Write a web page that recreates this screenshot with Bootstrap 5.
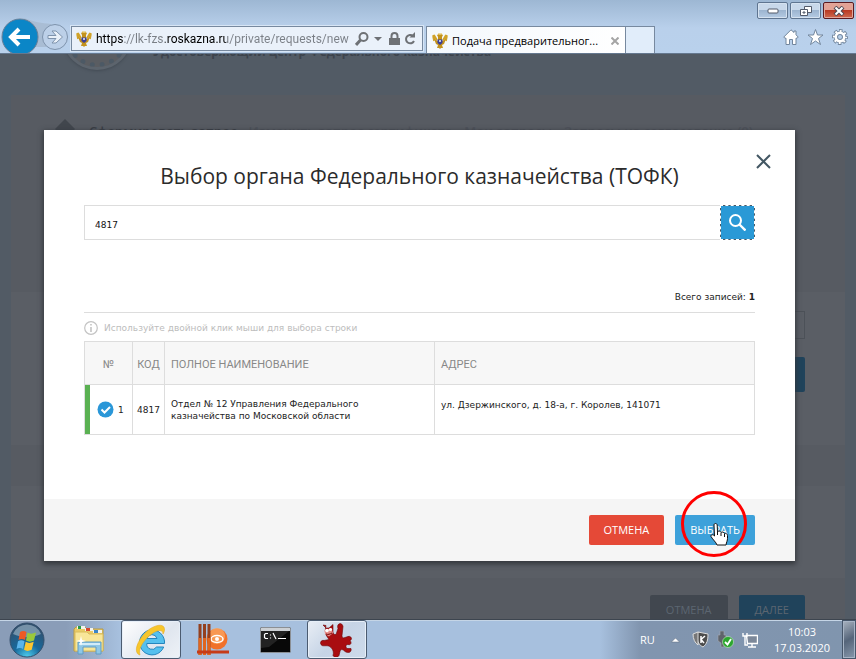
<!DOCTYPE html>
<html lang="ru">
<head>
<meta charset="utf-8">
<meta name="viewport" content="width=device-width, initial-scale=1">
<title>Подача предварительного запроса</title>
<link href="https://cdn.jsdelivr.net/npm/bootstrap@5.3.0/dist/css/bootstrap.min.css" rel="stylesheet">
<style>
  :root { --ui: "Open Sans", "Noto Sans", sans-serif; --body: "DejaVu Sans", Verdana, sans-serif; }
  body { font-family: var(--ui); font-size: 11px; line-height: 16px; color: #222; background: #525b65; }
  button { font-family: inherit; }
  svg { display: block; flex: none; }
  .bare { border: 0; background: none; padding: 0; }

  /* browser frame */
  .browser-bar { height: 54px; background: linear-gradient(#9db7d3, #b9d0eb 28px, #b9d1ec); border-bottom: 1px solid #65788f; }
  .nav-pair { width: 71px; height: 36px; overflow: hidden; }
  .address { flex: 0 1 352px; height: 25px; margin-bottom: 2px; padding: 0 5px 0 4px; background: #eaf1fa; border: 1px solid #77899f; outline: 1px solid #d7e5f5; }
  .address input { font: 400 12px/16px Roboto, var(--ui); height: 21px; margin-left: 4px; color: transparent; -webkit-background-clip: text; background-clip: text;
    background-image: linear-gradient(90deg, #000 28px, #7a7f86 28px 69px, #000 69px 130px, #7a7f86 130px); outline: 0; }
  .page-tab { flex: 0 1 200px; min-width: 0; height: 27px; margin-left: 3px; padding: 2px 6px 0 5px; background: linear-gradient(90deg, #f3f8fd, #fff); border: 1px solid #77899f; border-bottom: 0; }
  .new-tab { width: 29px; height: 27px; background: #e1edfa; border: 1px solid #77899f; border-width: 1px 1px 0 0; }
  .win-btns { gap: 2px; padding: 2px 2px 0 0; }
  .win-btn { width: 31px; height: 17px; border: 1px solid #5f7590; border-radius: 2px; background: linear-gradient(#c8d8ea 45%, #9db5d0 50%, #b5cbe4); box-shadow: inset 0 0 0 1px #d5e2f0; }
  .win-close { border-color: #5b1a20; background: linear-gradient(#e3a295 45%, #b93a23 50%, #cf6a50); box-shadow: inset 0 0 0 1px #e0a79c; }
  .tools { padding: 10px 8px 0 0; }

  /* dimmed page */
  .dim-brand { height: 41px; padding-left: 62px; }
  .seal { width: 70px; height: 70px; margin-top: -54px; border-radius: 50%; background: #5a5d62; border: 3px solid #5c646d; box-shadow: 0 1px 3px #434b54; }
  .seal::after { content: ""; display: block; height: 100%; border-radius: 50%; border: 5px dotted #4c5965; }
  .brand-text { margin: -10px 0 0 21px; font-size: 12px; font-weight: 700; color: #3c434c; white-space: nowrap; }
  .dim-page { margin: 0 11px; color: #3a3e45; }
  .band { background: #575b62; }
  .band-light { background: #5a5e65; }
  .band-a { height: 142px; padding: 24px 0 0 44px; }
  .band-b { height: 55px; } .band-c { height: 153px; } .band-d { height: 41px; } .band-e { height: 92px; }
  .band-c { padding: 19px 40px 0 73px; }
  .band-f { height: 90px; padding: 17px 40px 0; gap: 11px; }
  .steps { gap: 12px; font-size: 13px; font-weight: 600; padding: 4px 0 0 14px; white-space: nowrap; }
  .steps span + span { color: #4e525a; }
  .dim-field { height: 28px; margin-bottom: 18px; border: 1px solid #4c5158; background: transparent; }
  .dim-btn { height: 30px; padding: 0 16px; border: 0; border-radius: 2px; color: #5c6671; background: #20435b; }
  .dim-tall { height: 35px; }
  .dim-grey { background: #41474f; }

  /* dialog */
  .dialog-layer { position: absolute; inset: 76px 61px auto 44px; }
  .dialog-box { background: #fff; box-shadow: 0 2px 5px 1px #33373c; font-family: var(--body); font-size: 9px; line-height: 12px; }
  .dialog-main { padding: 34px 40px 64px; }
  .dialog-title { font: 400 21px/25px var(--ui); color: #2b2b2b; }
  .dialog-close { position: absolute; top: 24px; right: 24px; }
  .find-field { height: 35px; border: 1px solid #ddd; border-right: 0; padding: 4px 10px 0; font-size: 9px; outline: 0; color: #111; }
  .find-btn { width: 35px; height: 35px; border: 1px dashed #fff; border-radius: 0; background: linear-gradient(#2a99d6, #2a99d6) padding-box, #4a5a66 border-box; }
  .total { margin: 51px 0 9px; color: #222; }
  .hint { border-top: 1px solid #ddd; color: #bdbdbd; padding: 8px 0 6px; gap: 6px; }
  .orgs { table-layout: fixed; border: 1px solid #ddd; color: #222; }
  .orgs th, .orgs td { border: 1px solid #ddd; padding: 0 6px; }
  .orgs th { height: 43px; padding-top: 3px; background: #f7f7f7; font: 400 11px/16px Roboto, var(--ui); color: #888; }
  .orgs td { height: 50px; }
  .orgs .num { width: 48px; }
  .orgs .code { width: 32px; padding-left: 0; padding-right: 0; text-align: center; }
  .orgs .full { width: 270px; }
  .orgs td.num { box-shadow: inset 5px 0 #5ab152; padding: 0 0 0 12px; }
  .orgs .full-name { padding-right: 60px; }
  .orgs .addr { vertical-align: top; padding-top: 14px; }
  .dialog-foot { background: #f5f5f5; padding: 16px 40px; gap: 11px; }
  .act { height: 30px; padding: 0 15px; border: 0; border-radius: 2px; color: #fff; font: 400 11px/16px var(--ui); }
  .act-cancel { background: #e54937; }
  .act-pick { background: #3da1da; }
  .pointer-mark { position: absolute; left: 6px; top: -25px; pointer-events: none; }

  /* taskbar */
  .taskbar { height: 40px; border-top: 1px solid #3d454f; box-shadow: inset 0 1px #c5d5e6; background: linear-gradient(90deg, #8a9db8, #8a9db8 66px, #a7c0de 120px, #a7c0de calc(100% - 256px), #8195af calc(100% - 216px), #8095ae); padding-left: 9px; color: #fff; }
  .launchers { gap: 2px; margin-left: 14px; }
  .launch { width: 60px; height: 39px; }
  .running { background: linear-gradient(135deg, #e9eef5, #c6d4e6 50%, #cedbeb); border: 1px solid #4b5b70; border-radius: 3px; box-shadow: inset 0 0 0 1px #e7eff8; }
  .running-active { background: linear-gradient(135deg, #fff, #e0e6ef 60%, #eef2f7); }
  .clock { margin-right: 12px; }
  .peek { width: 14px; height: 39px; border: 1px solid #46566a; background: linear-gradient(150deg, #a9b3c0, #55657a 50%, #8797ab); box-shadow: inset 0 0 0 1px #a7b4c5; }
</style>
</head>
<body class="d-flex flex-column vh-100 overflow-hidden">

<svg class="d-none" aria-hidden="true">
  <symbol id="eagle" viewBox="0 0 16 16">
    <path d="M1 2l2 5-1-5 3 5M2 8l-1-5M15 2l-2 5 1-5-3 5M14 8l1-5" stroke="#d0a229" stroke-width="1.6" fill="none"/>
    <path d="M2 6l4 2V4L5 2l2-1 1 1 1-1 2 1-1 2v4l4-2-2 5-2 1 1 3H9l-1 1-1-1H5l1-3-2-1z" fill="#c3921c"/>
    <path d="M6 1h1M9 1h1M8 0v2" stroke="#e3bd45"/><path d="M5.500 6.500h5v3.500l-2.500 2-2.500-2z" fill="#3b3e98"/><path d="M7 7h2v2H7z" fill="#b7c4e8"/>
  </symbol>
</svg>

<header class="browser-bar d-flex align-items-end flex-shrink-0">
  <div class="nav-pair flex-shrink-0">
    <svg width="71" height="36" viewBox="0 0 71 36">
      <path d="M24 1C34 5 42 6 51 7L46 30H30z" fill="#a9bdd4"/>
      <circle cx="20" cy="20" r="18" fill="#0b86c7" stroke="#6a7f97"/>
      <path d="M11 20h19M19 12l-8 8 8 8" fill="none" stroke="#fff" stroke-width="4"/>
      <circle cx="55" cy="20" r="12.500" fill="#bcd0e8" stroke="#7e93ac"/>
      <path d="M48 18.500h8L52 14h4l6.500 6-6.500 6h-4l4-4.500h-8z" fill="#e9f0f8" stroke="#7e93ac"/>
    </svg>
  </div>
  <div class="address d-flex align-items-center">
    <svg width="16" height="16"><use href="#eagle"/></svg>
    <input class="bare flex-grow-1 w-100" type="text" aria-label="Адрес" value="https://lk-fzs.roskazna.ru/private/requests/new">
    <svg width="62" height="16" viewBox="0 0 62 16">
      <circle cx="8.500" cy="6" r="4" fill="none" stroke="#6e7175" stroke-width="2"/><path d="M5.500 9L1 14" stroke="#6e7175" stroke-width="3"/>
      <path d="M19 6h8l-4 4z" fill="#6e7175"/>
      <path d="M34 7h11v7H34z" fill="#6e7175"/><path d="M36.500 8V5a3 3 0 0 1 6 0v3" fill="none" stroke="#6e7175" stroke-width="2"/>
      <path d="M58 5a4.200 4.200 0 1 0 1 5" fill="none" stroke="#6e7175" stroke-width="2"/><path d="M54.500 6.500h5.500V1z" fill="#6e7175"/>
    </svg>
  </div>
  <div class="page-tab d-flex align-items-center">
    <svg width="16" height="16"><use href="#eagle"/></svg>
    <span class="text-nowrap text-black ms-1 flex-grow-1">Подача предварительног...</span>
    <button class="bare" aria-label="Закрыть вкладку"><svg width="8" height="8" viewBox="0 0 8 8"><path d="M0.500 0.500l7 7M7.500 0.500l-7 7" stroke="#a5a5a5" stroke-width="2"/></svg></button>
  </div>
  <button class="new-tab p-0 rounded-0" aria-label="Новая вкладка"></button>
  <div class="ms-auto align-self-stretch d-flex flex-column align-items-end">
    <div class="win-btns d-flex">
      <button class="win-btn p-0 d-flex align-items-center justify-content-center" aria-label="Свернуть"><svg width="12" height="6"><rect x="1" y="1" width="10" height="4" rx="1" fill="#fff" stroke="#535b6b"/></svg></button>
      <button class="win-btn p-0 d-flex align-items-center justify-content-center" aria-label="Восстановить"><svg width="12" height="12" viewBox="0 0 12 12"><path d="M4.500 1.500h7v6h-7z" fill="#fff" stroke="#535b6b"/><path d="M.5 4.500h7v6h-7z" fill="#fff" stroke="#535b6b"/><path d="M3 7h2v1H3z" fill="none" stroke="#535b6b"/></svg></button>
      <button class="win-btn win-close p-0 d-flex align-items-center justify-content-center" aria-label="Закрыть"><svg width="12" height="10" viewBox="0 0 12 10"><path d="M2 1l8 8M10 1L2 9" stroke="#4e4a55" stroke-width="4"/><path d="M2.500 1.500l7 7M9.500 1.500l-7 7" stroke="#fff" stroke-width="2"/></svg></button>
    </div>
    <div class="tools d-flex gap-2">
      <button class="bare" aria-label="Домой"><svg width="16" height="16" viewBox="0 0 16 16"><path d="M8 .8L.8 8l1 1.200H3v6.300h3.500v-5h3v5H13V9.200h1.200l1-1.200L13 5.800V2h-2v1.500z" fill="#fff" stroke="#71859c"/></svg></button>
      <button class="bare" aria-label="Избранное"><svg width="17" height="16" viewBox="0 0 16 16"><path d="M8 .5l2 5.500h5.500L11 9.500l2 6-5-3.500-5 3.500 2-6L.5 6H6z" fill="#fff" stroke="#71859c"/></svg></button>
      <button class="bare" aria-label="Параметры"><svg width="16" height="16" viewBox="0 0 16 16"><circle cx="8" cy="8" r="6.300" fill="none" stroke="#71859c" stroke-width="3.400" stroke-dasharray="3.200 1.750" stroke-dashoffset="1.600"/><circle cx="8" cy="8" r="4.500" fill="none" stroke="#71859c" stroke-width="3.600"/><circle cx="8" cy="8" r="6" fill="none" stroke="#fff" stroke-width="2.200" stroke-dasharray="1.800 2.912" stroke-dashoffset=".9"/><circle cx="8" cy="8" r="4.100" fill="none" stroke="#fff" stroke-width="2.800"/><circle cx="8" cy="8" r="2.500" fill="#b9d1ec" stroke="#71859c"/></svg></button>
    </div>
  </div>
</header>

<main class="flex-grow-1 position-relative overflow-hidden">
  <div class="dim-brand d-flex align-items-start">
    <div class="seal flex-shrink-0"></div>
    <div class="brand-text">Удостоверяющий центр Федерального казначейства</div>
  </div>
  <div class="dim-page">
    <div class="band band-a d-flex align-items-start">
      <svg width="20" height="20" viewBox="0 0 20 20"><path d="M10 0l10 10-10 10L0 10z" fill="#41464d"/></svg>
      <div class="steps d-flex"><span>Сформировать запрос</span><span>Изменить запрос сертификата</span><span>Мои запросы</span><span>Запросы на согласование (0)</span></div>
    </div>
    <div class="band band-b"></div>
    <div class="band-light band-c">
      <input class="dim-field d-block w-100" type="text" aria-label="Орган Федерального казначейства">
      <div class="text-end"><button class="dim-btn dim-tall">ВЫБРАТЬ</button></div>
    </div>
    <div class="band band-d"></div>
    <div class="band-light band-e"></div>
    <div class="band band-f d-flex justify-content-end align-items-start">
      <button class="dim-btn dim-grey">ОТМЕНА</button>
      <button class="dim-btn">ДАЛЕЕ</button>
    </div>
  </div>

  <div class="dialog-layer" role="dialog" aria-labelledby="dlg-title">
    <div class="dialog-box">
      <button class="dialog-close bare" aria-label="Закрыть окно"><svg width="15" height="15" viewBox="0 0 15 15"><path d="M1 1l13 13M14 1L1 14" stroke="#435763" stroke-width="2"/></svg></button>
      <div class="dialog-main">
        <h1 class="dialog-title text-center mb-3" id="dlg-title">Выбор органа Федерального казначейства (ТОФК)</h1>
        <div class="d-flex">
          <input class="find-field flex-grow-1 rounded-0" type="text" aria-label="Поиск" value="4817">
          <button class="find-btn p-0 d-flex align-items-center justify-content-center" aria-label="Найти"><svg width="17" height="17" viewBox="0 0 17 17"><circle cx="6.500" cy="6.500" r="5.500" fill="none" stroke="#fff" stroke-width="2"/><path d="M10.500 10.500l6 6" stroke="#fff" stroke-width="2.400"/></svg></button>
        </div>
        <div class="total text-end">Всего записей: <b>1</b></div>
        <div class="hint d-flex align-items-center">
          <svg width="14" height="14" viewBox="0 0 14 14"><circle cx="7" cy="7" r="6.300" fill="none" stroke="#c3c3c3" stroke-width="1.200"/><path d="M7 3v1.500M7 6v5" stroke="#c3c3c3" stroke-width="1.600"/></svg>
          <span>Используйте двойной клик мыши для выбора строки</span>
        </div>
        <table class="orgs w-100">
          <thead><tr><th class="num text-center">№</th><th class="code">КОД</th><th class="full">ПОЛНОЕ НАИМЕНОВАНИЕ</th><th>АДРЕС</th></tr></thead>
          <tbody><tr>
            <td class="num"><div class="d-flex align-items-center gap-1"><svg width="17" height="17" viewBox="0 0 17 17"><circle cx="8.500" cy="8.500" r="8" fill="#2a97d8"/><path d="M4.500 8.500l3 3 5.500-5.500" fill="none" stroke="#fff" stroke-width="2"/></svg><span>1</span></div></td>
            <td class="code">4817</td>
            <td class="full-name">Отдел № 12 Управления Федерального казначейства по Московской области</td>
            <td class="addr">ул. Дзержинского, д. 18-а, г. Королев, 141071</td>
          </tr></tbody>
        </table>
      </div>
      <div class="dialog-foot d-flex justify-content-end">
        <button class="act act-cancel">ОТМЕНА</button>
        <div class="position-relative">
          <button class="act act-pick">ВЫБРАТЬ</button>
          <svg class="pointer-mark" width="68" height="68" viewBox="0 0 68 68">
            <g transform="translate(-1 0)"><path d="M34 35c0-2 3-2 3.200 0l.3 7c1-1.500 3-1 3.500.5 1-1 3-.5 3.500 1 1.500-.5 3 .5 3 2v3c0 2-1 3.500-1.500 6.500h-9c-1-3-4-5-6-8.500-.5-2 2-2.500 3.500-.500z" fill="#fff" stroke="#111"/>
            <path d="M37.500 41v4M41 43v3M44.500 44v3" stroke="#111"/></g>
            <circle cx="33" cy="34" r="31.500" fill="none" stroke="#f00" stroke-width="3"/>
          </svg>
        </div>
      </div>
    </div>
  </div>
</main>

<footer class="taskbar d-flex align-items-center flex-shrink-0">
  <button class="bare" aria-label="Пуск"><svg width="36" height="36" viewBox="0 0 36 36">
    <defs><radialGradient id="orb" cx=".5" cy="1" r=".9"><stop offset="0" stop-color="#4fd0f0"/><stop offset=".45" stop-color="#17699c"/><stop offset="1" stop-color="#31506e"/></radialGradient></defs>
    <circle cx="18" cy="18" r="17" fill="url(#orb)" stroke="#34506d"/><path d="M4 12a15 15 0 0 1 28 0c-8 4-20 4-28 0z" fill="#a5bccd" opacity=".6"/>
    <path d="M11 10c2-1.500 4.500-1.500 6.500 0L16 18c-2-1.500-4.500-1.500-6.500 0z" fill="#ee5a24"/><path d="M18.500 10.500c2 1.500 5 1.500 8.500 0l-2 8c-3 1.500-5.500 1.500-8 0z" fill="#9ac93c"/>
    <path d="M9 19.300c2-1.500 4.500-1.500 6.500 0L14 27c-2-1.500-4.500-1.500-6.500 0z" fill="#5ab4ea"/><path d="M16.700 19.800c2 1.500 5 1.500 8 0l-2 8c-3 1.500-5.500 1.500-7.700 0z" fill="#fdc62f"/></svg></button>
  <div class="launchers d-flex">
  <button class="bare launch d-flex align-items-center justify-content-center" aria-label="Проводник"><svg width="32" height="32" viewBox="0 0 32 32">
    <path d="M3 3h9l1 2h17v22H1V5z" fill="#eacb66" stroke="#b79a45"/><path d="M4 2h8v3H4z" fill="#f4f4ec"/><path d="M5 2h3v3H5z" fill="#2a9b48"/><path d="M12 4h8v3h-8z" fill="#f4f4ec"/><path d="M13 4h4v3h-4z" fill="#d8492f"/><path d="M20 6h9v3h-9z" fill="#f4f4ec"/><path d="M21 6h4v3h-4z" fill="#3a85c8"/>
    <path d="M2 8h12l2 2h14v17H2z" fill="#f8e698" stroke="#d9bc5d"/>
    <path d="M5 18h23v12h-5v-7H10v7H5z" fill="#8fc7e6" stroke="#5f9cc4"/><path d="M6 19h21v2H6z" fill="#d2ecf8"/><path d="M8 12l1 4 4 1-4 1-1 4-1-4-4-1 4-1z" fill="#fff"/></svg></button>
  <button class="bare launch running running-active d-flex align-items-center justify-content-center" aria-label="Internet Explorer"><svg width="32" height="32" viewBox="0 0 32 32">
    <path fill-rule="evenodd" d="M29.500 19.500V17a12.500 12.500 0 1 0-.8 6h-7.200a5.300 5.300 0 0 1-9.700-3.500zM11.800 14.500a5.300 5.300 0 0 1 10.200 0z" fill="#55c0ee" stroke="#2585bd"/>
    <path d="M5 31C-3 29 3 14 14 5.500c7-5 16-6.500 15.500.5 0 1-.5 2.500-1.500 4 0-5-5.500-4.500-12 .5C8 17 3 25 5 31z" fill="#f7c62c" stroke="#e0a41c" stroke-width=".5"/></svg></button>
  <button class="bare launch d-flex align-items-center justify-content-center" aria-label="Панели"><svg width="32" height="34" viewBox="0 0 32 34">
    <circle cx="20" cy="16" r="10.500" fill="#f0712a"/><circle cx="20" cy="13" r="8" fill="#fba965" opacity=".7"/><ellipse cx="20" cy="16" rx="6" ry="3.500" fill="none" stroke="#fff" stroke-width="1.500"/><circle cx="20" cy="16" r="2" fill="#fff"/>
    <path d="M3 1v31M7.500 1v31M12 1v31" stroke="#94401f" stroke-width="3"/><path d="M3 15v17M7.500 15v17M12 15v17" stroke="#e0661f" stroke-width="3"/><path d="M0 29h32" stroke="#c63b18" stroke-width="3"/></svg></button>
  <button class="bare launch d-flex align-items-center justify-content-center" aria-label="Командная строка"><svg width="31" height="26" viewBox="0 0 31 26">
    <rect x=".5" y=".5" width="30" height="25" rx="1" fill="#080808" stroke="#8b8f94"/><path d="M1 1h29v3H1z" fill="#ccd0d4"/><path d="M1 4h28L9 20 1 21z" fill="#333" opacity=".6"/>
    <path d="M8 6.500H5.500L4.500 7.500v3l1 1H8M10.500 7.500v1M10.500 10.500v1M13 6l3 6M18 11.500h8" fill="none" stroke="#fff" stroke-width="1.200"/></svg></button>
  <button class="bare launch running d-flex align-items-center justify-content-center" aria-label="Кот"><svg width="34" height="34" viewBox="0 0 34 34">
    <path d="M3 2l3 3 3 0 4-3.500 0 7c0 2 1 3.500 3 3l2-6c-2-5 4-7 5-2l-1 9c0 2 1 3 3 2l3-1c3-1 5 3 2 4 2 2 1 5-2 4-2 0-3 2-1 4l4 0c1 4-3 5-6 3-2-2-4-3-5 0l-1 4c-2 3-5 2-6 0 1-3 0-6-2-8-3-3-7-1-9-2-3-2-1-6 2-5l5-1-2-3c-2-2-2-7-1-11z" fill="#a90d10" stroke="#6c0507" stroke-width=".6"/>
    <path d="M4.500 7l7-2 1.500 5-4 3.500-4-2.500z" fill="#e58b87"/><circle cx="7" cy="7.500" r="1.800" fill="#fff"/><circle cx="10.500" cy="6.500" r="1.600" fill="#fff"/><path d="M6 11c2 1 4 0 6-1" stroke="#700" fill="none"/></svg></button>
  </div>
  <div class="ms-auto d-flex align-items-center">
    <span class="me-3">RU</span>
    <svg class="me-2" width="9" height="6" viewBox="0 0 9 6"><path d="M.5 5L4.500 1l4 4z" fill="#fff" stroke="#5c6b7e" stroke-width=".5"/></svg>
    <svg class="ms-1 me-2" width="17" height="17" viewBox="0 0 17 17"><path d="M6 1l5 1 5 1c0 6-1 10-5 13C7 14 5 11 5 4z" fill="#4c4c4c" stroke="#ddd"/><path d="M1 3l5-2v13C3 12 1 8 1 3z" fill="#777" stroke="#ddd"/><path d="M9 5v7M13 5l-4 3.500 3 3.500" stroke="#fff" fill="none" stroke-width="1.500"/></svg>
    <svg class="me-2" width="17" height="17" viewBox="0 0 17 17"><path d="M3 0h4v4h2v6l-2 2v4H4v-4l-3-2V4h2z" fill="#5f646b" stroke="#a5aab1" stroke-width=".6"/><circle cx="11" cy="11" r="5.500" fill="#2ba62e" stroke="#c9e6c6" stroke-width=".6"/><path d="M8 11l2.500 2.500L14 8" stroke="#fff" stroke-width="1.800" fill="none"/></svg>
    <svg class="me-3" width="16" height="16" viewBox="0 0 16 16"><path d="M4.500 3.500h11v8h-10zM10 12v3M6 15h8" fill="#7c8899" stroke="#fff" stroke-width="1.400"/><path d="M1 1v3h4V1M3 4v9h3" fill="none" stroke="#fff" stroke-width="1.400"/></svg>
    <div class="clock text-center">10:03<br>17.03.2020</div>
    <button class="peek p-0" aria-label="Свернуть все окна"></button>
  </div>
</footer>

<script src="https://cdn.jsdelivr.net/npm/bootstrap@5.3.0/dist/js/bootstrap.bundle.min.js"></script>
</body>
</html>
